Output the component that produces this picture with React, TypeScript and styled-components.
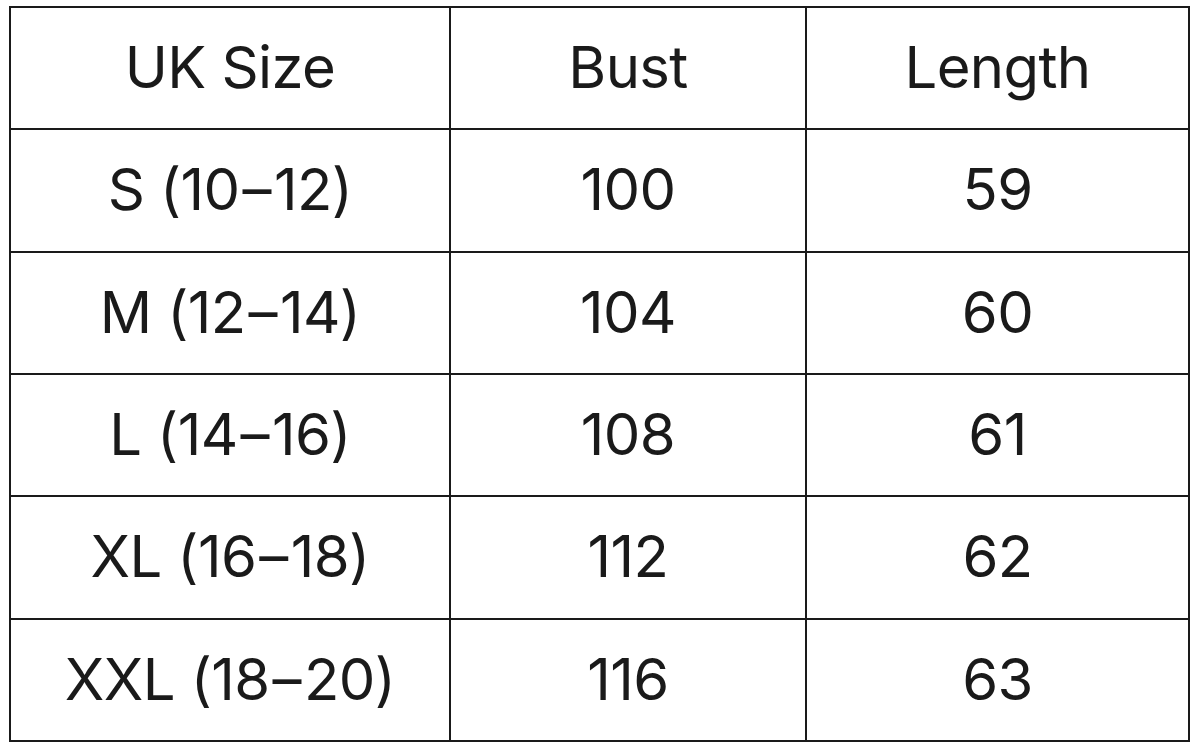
import React from "react";
import styled, { createGlobalStyle } from "styled-components";

const Global = createGlobalStyle`
  html, body { margin: 0; padding: 0; background: #ffffff; }
  body { font-family: Inter, "Liberation Sans", Arial, sans-serif; }
`;

const Page = styled.div`
  width: 1200px;
  height: 753px;
  padding: 6px 0 0 9px;
  box-sizing: border-box;
  background: #fff;
`;

const Table = styled.div`
  display: grid;
  grid-template-columns: 438px 354px 381px;
  grid-auto-rows: 1fr;
  gap: 2px;
  width: 1181px;
  height: 736px;
  box-sizing: border-box;
  border: 2px solid #1a1a1a;
  background: #1a1a1a;
`;

const Cell = styled.div`
  background: #fff;
  display: flex;
  align-items: center;
  justify-content: center;
  font-family: Inter, "Liberation Sans", Arial, sans-serif;
  font-size: 58px;
  font-weight: 400;
  letter-spacing: -0.6px;
  color: #1a1a1a;
  padding-bottom: 2px;
  white-space: nowrap;
`;

const Dash = styled.span`
  margin: 0 3px;
`;

const header = ["UK Size", "Bust", "Length"];
const rows = [
  ["S (10–12)", "100", "59"],
  ["M (12–14)", "104", "60"],
  ["L (14–16)", "108", "61"],
  ["XL (16–18)", "112", "62"],
  ["XXL (18–20)", "116", "63"],
];

function renderText(t: string) {
  const parts = t.split("–");
  if (parts.length === 1) return t;
  return (
    <>
      {parts[0]}
      <Dash>–</Dash>
      {parts[1]}
    </>
  );
}

export default function App() {
  return (
    <Page>
      <Global />
      <Table>
        {header.map((h) => (
          <Cell key={h}>{h}</Cell>
        ))}
        {rows.map((r) =>
          r.map((c, i) => <Cell key={r[0] + i}>{renderText(c)}</Cell>)
        )}
      </Table>
    </Page>
  );
}
